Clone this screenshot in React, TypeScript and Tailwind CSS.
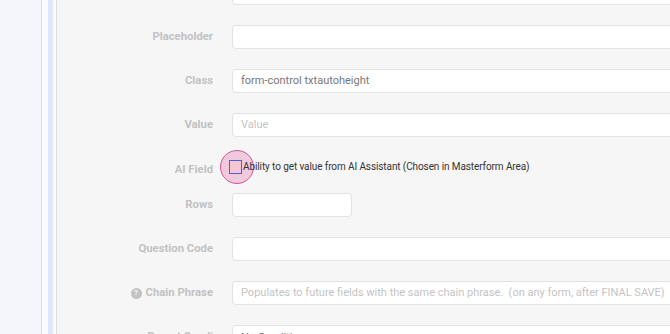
const inputCls =
  "h-[24px] w-[470px] shrink-0 rounded-[4px] border border-[#e2e2e2] bg-white px-[8px] text-[11px] text-[#777] flex items-center";

function Row({ label, children, icon }: { label: string; children: React.ReactNode; icon?: boolean }) {
  return (
    <div className="flex items-center">
      <div className="flex w-[156px] shrink-0 items-center justify-end gap-[4px] text-[11.3px] font-bold text-[#c2c2c2]">
        {icon && (
          <span className="flex h-[11px] w-[11px] items-center justify-center rounded-full bg-[#c2c2c2] text-[8px] font-bold text-[#f6f6f6]">
            ?
          </span>
        )}
        {label}
      </div>
      <div className="ml-[19px] flex items-center">{children}</div>
    </div>
  );
}

export default function App() {
  return (
    <div
      className="flex h-[334px] w-[670px] overflow-hidden bg-[#f4f6fb]"
      style={{ fontFamily: "Roboto, 'Liberation Sans', sans-serif" }}
    >
      <div className="w-[41px] shrink-0 bg-[#f4f6fb]" />
      <div className="w-[1px] shrink-0 bg-[#dcdde2]" />
      <div className="w-[6px] shrink-0 bg-[#fafbfd]" />
      <div className="w-[5px] shrink-0 bg-[#dde9f8]" />
      <div className="w-[3px] shrink-0 bg-[#fafbfd]" />
      <div className="w-[1px] shrink-0 bg-[#dedede]" />
      <div className="relative flex-1 bg-[#f6f6f6]">
        <div className="mt-[-19px] flex flex-col gap-[20px]">
          <Row label="">
            <div className={inputCls} />
          </Row>
          <Row label="Placeholder">
            <div className={inputCls} />
          </Row>
          <Row label="Class">
            <div className={inputCls}>form-control txtautoheight</div>
          </Row>
          <Row label="Value">
            <div className={inputCls + " !text-[#c4c4c4]"}>Value</div>
          </Row>
          <div className="flex h-[16px] items-start">
            <div className="mt-[5px] w-[156px] shrink-0 text-right text-[11.3px] font-bold text-[#c2c2c2]">AI Field</div>
            <div className="relative ml-[16px] mt-[2px] flex items-center">
              <span className="absolute left-[-9px] top-[-9px] h-[34px] w-[34px] rounded-full border-[1.5px] border-[#d9529a] bg-[#f0c9dc]" />
              <span className="relative h-[14px] w-[13px] border-[1.5px] border-[#5a5ad8] bg-[#f3c6d4]" />
              <span className="relative ml-[1px] text-[10px] tracking-[-0.1px] text-[#333]">
                Ability to get value from AI Assistant (Chosen in Masterform Area)
              </span>
            </div>
          </div>
          <Row label="Rows">
            <div className={inputCls + " !w-[120px]"} />
          </Row>
          <Row label="Question Code">
            <div className={inputCls} />
          </Row>
          <Row label="Chain Phrase" icon>
            <div className={inputCls + " !text-[#c4c4c4] whitespace-pre"}>
              Populates to future fields with the same chain phrase.  (on any form, after FINAL SAVE)
            </div>
          </Row>
          <Row label="Parent Condi">
            <div className={inputCls + " items-start pt-[4px] !text-[#666]"}>No Conditi</div>
          </Row>
        </div>
      </div>
    </div>
  );
}
